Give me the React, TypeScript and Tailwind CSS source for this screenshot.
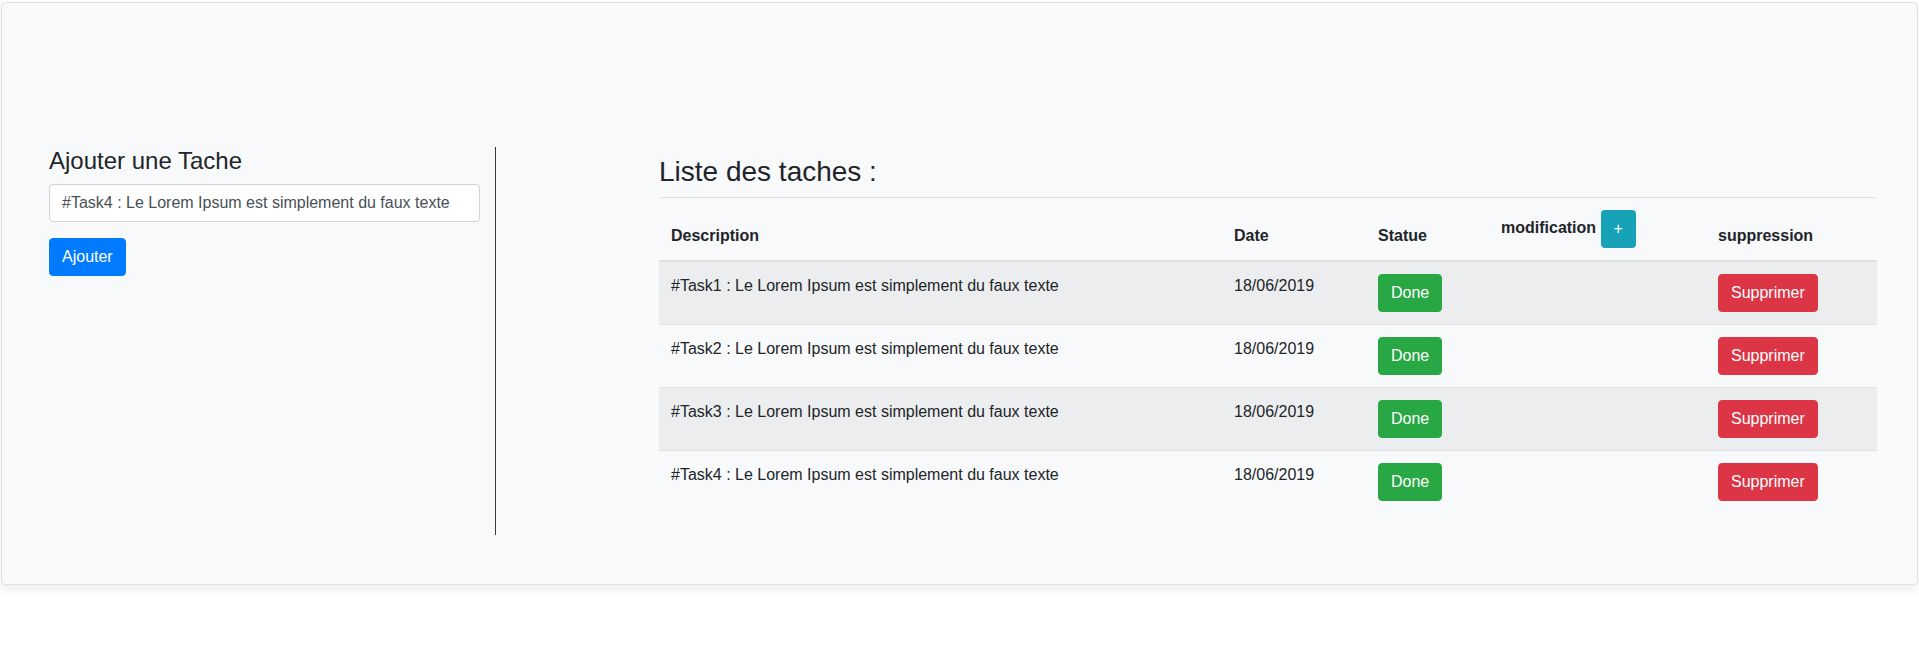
import React from "react";

const tasks = [1, 2, 3, 4].map((n) => ({
  id: n,
  text: `#Task${n} : Le Lorem Ipsum est simplement du faux texte`,
  date: "18/06/2019",
}));

export default function App() {
  return (
    <div
      className="min-h-[648px] bg-white text-[#212529] text-[16px] leading-[24px]"
      style={{ fontFamily: '"Liberation Sans", Arial, Helvetica, sans-serif' }}
    >
      <div className="pt-[2px] pl-[1px] pr-[1px]">
        <div className="h-[583px] rounded-[4px] border border-[#dee2e6] bg-[#f8f9fa] shadow-[0_6px_10px_rgba(0,0,0,0.06)] pt-[144px] pl-[47px]">
          <div className="flex items-stretch">
            {/* Left column */}
            <div className="w-[447px] border-r border-[#343a40] pr-[15px] h-[388px]">
              <h4 className="text-[24px] leading-[28.8px] font-normal mb-[8px]">Ajouter une Tache</h4>
              <div className="h-[38px] rounded-[4px] border border-[#ced4da] bg-white px-[12px] flex items-center text-[#495057]">
                #Task4 : Le Lorem Ipsum est simplement du faux texte
              </div>
              <button className="mt-[16px] h-[38px] px-[12px] rounded-[4px] border border-[#007bff] bg-[#007bff] text-white">
                Ajouter
              </button>
            </div>
            {/* Right column */}
            <div className="ml-[163px] w-[1218px] pt-[8px]">
              <h3 className="text-[28px] leading-[33.6px] font-normal mb-[8px]">Liste des taches :</h3>
              <table className="w-[1218px] border-collapse table-fixed">
                <colgroup>
                  <col className="w-[563px]" />
                  <col className="w-[144px]" />
                  <col className="w-[124px]" />
                  <col className="w-[216px]" />
                  <col className="w-[171px]" />
                </colgroup>
                <thead>
                  <tr>
                    {["Description", "Date", "Statue"].map((h) => (
                      <th key={h} className="text-left align-bottom font-bold p-[12px] border-t border-t-[#dee2e6] border-b-2 border-b-[#dee2e6]">
                        {h}
                      </th>
                    ))}
                    <th className="text-left align-bottom font-bold p-[12px] pl-[11px] border-t border-t-[#dee2e6] border-b-2 border-b-[#dee2e6]">
                      modification{" "}
                      <button className="h-[38px] w-[35px] rounded-[4px] bg-[#17a2b8] text-white font-normal align-middle">+</button>
                    </th>
                    <th className="text-left align-bottom font-bold p-[12px] border-t border-t-[#dee2e6] border-b-2 border-b-[#dee2e6]">
                      suppression
                    </th>
                  </tr>
                </thead>
                <tbody>
                  {tasks.map((t, i) => (
                    <tr key={t.id} className={i % 2 === 0 ? "bg-[#ecedee]" : ""}>
                      <td className="p-[12px] align-top border-t border-[#dee2e6]">{t.text}</td>
                      <td className="p-[12px] align-top border-t border-[#dee2e6]">{t.date}</td>
                      <td className="p-[12px] align-top border-t border-[#dee2e6]">
                        <button className="h-[38px] px-[12px] rounded-[4px] border border-[#28a745] bg-[#28a745] text-white">Done</button>
                      </td>
                      <td className="p-[12px] align-top border-t border-[#dee2e6]"></td>
                      <td className="p-[12px] align-top border-t border-[#dee2e6]">
                        <button className="h-[38px] px-[12px] rounded-[4px] border border-[#dc3545] bg-[#dc3545] text-white">Supprimer</button>
                      </td>
                    </tr>
                  ))}
                </tbody>
              </table>
            </div>
          </div>
        </div>
      </div>
    </div>
  );
}
